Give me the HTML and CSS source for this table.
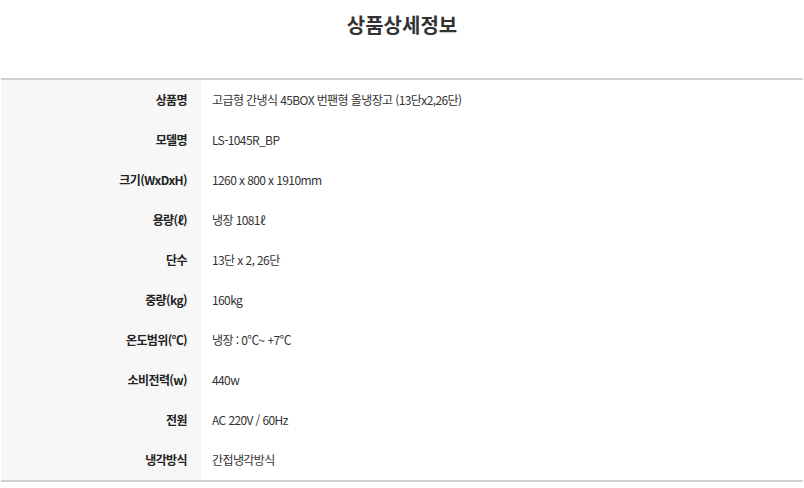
FILE: index.html
```html
<!DOCTYPE html>
<html lang="ko">
<head>
<meta charset="utf-8">
<title>상품상세정보</title>
<link rel="stylesheet" href="styles.css">
</head>
<body>
<div class="page">
  <h2 class="title">상품상세정보</h2>
  <table class="spec">
    <tbody>
      <tr><th>상품명</th><td>고급형 간냉식 45BOX 번팬형 올냉장고 (13단x2,26단)</td></tr>
      <tr><th>모델명</th><td>LS-1045R_BP</td></tr>
      <tr><th>크기(WxDxH)</th><td>1260 x 800 x 1910mm</td></tr>
      <tr><th>용량(ℓ)</th><td>냉장 1081ℓ</td></tr>
      <tr><th>단수</th><td>13단 x 2, 26단</td></tr>
      <tr><th>중량(kg)</th><td>160kg</td></tr>
      <tr><th>온도범위(℃)</th><td>냉장 : 0℃~ +7℃</td></tr>
      <tr><th>소비전력(w)</th><td>440w</td></tr>
      <tr><th>전원</th><td>AC 220V / 60Hz</td></tr>
      <tr><th>냉각방식</th><td>간접냉각방식</td></tr>
    </tbody>
  </table>
</div>
</body>
</html>
```
FILE: styles.css
```css
html, body {
  margin: 0;
  padding: 0;
  background: #fff;
}
body {
  font-family: "Noto Sans CJK KR", "Noto Sans", "Liberation Sans", sans-serif;
  color: #333;
}
.page {
  padding: 0 1px;
}
.title {
  margin: 0;
  height: 78px;
  padding-top: 11px;
  box-sizing: border-box;
  text-align: center;
  font-size: 20px;
  font-weight: 700;
  color: #333;
  line-height: 28px;
  letter-spacing: 0;
}
.spec {
  width: 100%;
  border-collapse: collapse;
  border-top: 2px solid #cfcfcf;
  border-bottom: 2px solid #cfcfcf;
  font-size: 12px;
  letter-spacing: -0.6px;
}
.spec th,
.spec td {
  height: 40px;
  padding: 0;
  vertical-align: middle;
  line-height: 16px;
}
.spec th {
  width: 200px;
  background: #f7f7f7;
  text-align: right;
  padding-right: 14px;
  box-sizing: border-box;
  font-weight: 700;
  color: #222;
}
.spec td {
  padding-left: 11px;
  text-align: left;
  font-weight: 400;
  color: #333;
}
```
